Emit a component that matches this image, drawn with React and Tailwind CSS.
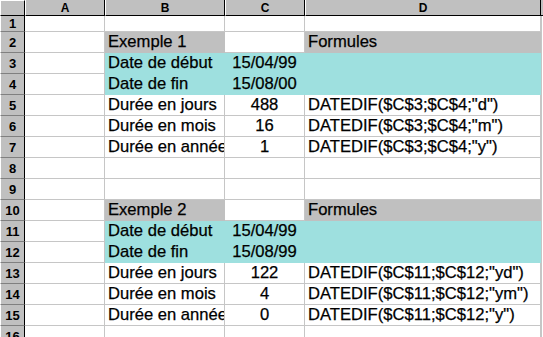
import React from 'react'

const rows = [
  { n: 1, h: 'h-[16px]' },
  { n: 2, b: 'Exemple 1', d: 'Formules', fill: 'head' },
  { n: 3, b: 'Date de début', c: '15/04/99', fill: 'teal' },
  { n: 4, b: 'Date de fin', c: '15/08/00', fill: 'teal' },
  { n: 5, b: 'Durée en jours', c: '488', d: 'DATEDIF($C$3;$C$4;"d")' },
  { n: 6, b: 'Durée en mois', c: '16', d: 'DATEDIF($C$3;$C$4;"m")' },
  { n: 7, b: 'Durée en années', c: '1', d: 'DATEDIF($C$3;$C$4;"y")' },
  { n: 8 },
  { n: 9 },
  { n: 10, b: 'Exemple 2', d: 'Formules', fill: 'head' },
  { n: 11, b: 'Date de début', c: '15/04/99', fill: 'teal' },
  { n: 12, b: 'Date de fin', c: '15/08/99', fill: 'teal' },
  { n: 13, b: 'Durée en jours', c: '122', d: 'DATEDIF($C$11;$C$12;"yd")' },
  { n: 14, b: 'Durée en mois', c: '4', d: 'DATEDIF($C$11;$C$12;"ym")' },
  { n: 15, b: 'Durée en années', c: '0', d: 'DATEDIF($C$11;$C$12;"y")' },
  { n: 16 },
]

const plain = 'bg-white border-r border-b border-[#c6c6c6]'
const grey = 'bg-[#c0c0c0] border-r border-b border-[#c0c0c0]'
const teal = 'bg-[#9ee0df] border-r border-b border-[#9ee0df]'

function Cell({ cls, children, center }) {
  return (
    <div className={`${cls} flex items-end pb-[1px] overflow-hidden whitespace-nowrap ${center ? 'justify-center' : 'pl-[3px]'}`}>
      {children}
    </div>
  )
}

export default function App() {
  return (
    <div className="w-[543px] h-[337px] overflow-hidden bg-white text-black" style={{ fontFamily: '"Liberation Sans", Arial, sans-serif' }}>
      {/* Column headers */}
      <div className="flex h-[16px] text-[12px] font-bold">
        <div className="w-[25px] bg-[#c0c0c0] border-r border-b border-black border-t border-l border-t-white border-l-white" />
        {[['A', 'w-[80px]'], ['B', 'w-[120px]'], ['C', 'w-[80px]'], ['D', 'w-[236px]']].map(([l, w]) => (
          <div key={l} className={`${w} bg-[#c0c0c0] border-r border-b border-black border-l border-l-white flex items-center justify-center leading-none`}>
            {l}
          </div>
        ))}
        <div className="flex-1 bg-[#c0c0c0] border-b border-black" />
      </div>

      {rows.map((r) => {
        const hb = r.fill === 'head' ? grey : r.fill === 'teal' ? teal : plain
        const hd = r.fill === 'head' ? grey : r.fill === 'teal' ? teal : plain
        const hc = r.fill === 'teal' ? teal : plain
        return (
          <div key={r.n} className={`flex ${r.h || 'h-[21px]'} text-[16.6px] leading-none [-webkit-text-stroke:0.25px_black]`}>
            <div className="w-[25px] bg-[#c0c0c0] border-r border-r-black border-b border-b-[#808080] border-l border-l-white flex items-center justify-center text-[13px] font-bold [-webkit-text-stroke:0px]">
              {r.n}
            </div>
            <Cell cls={`w-[80px] ${plain}`} />
            <Cell cls={`w-[120px] ${hb}`}>{r.b}</Cell>
            <Cell cls={`w-[80px] ${hc}`} center>{r.c}</Cell>
            <Cell cls={`w-[236px] ${hd}`}>{r.d}</Cell>
            <div className="flex-1 bg-white border-l border-[#c6c6c6]" />
          </div>
        )
      })}
    </div>
  )
}
